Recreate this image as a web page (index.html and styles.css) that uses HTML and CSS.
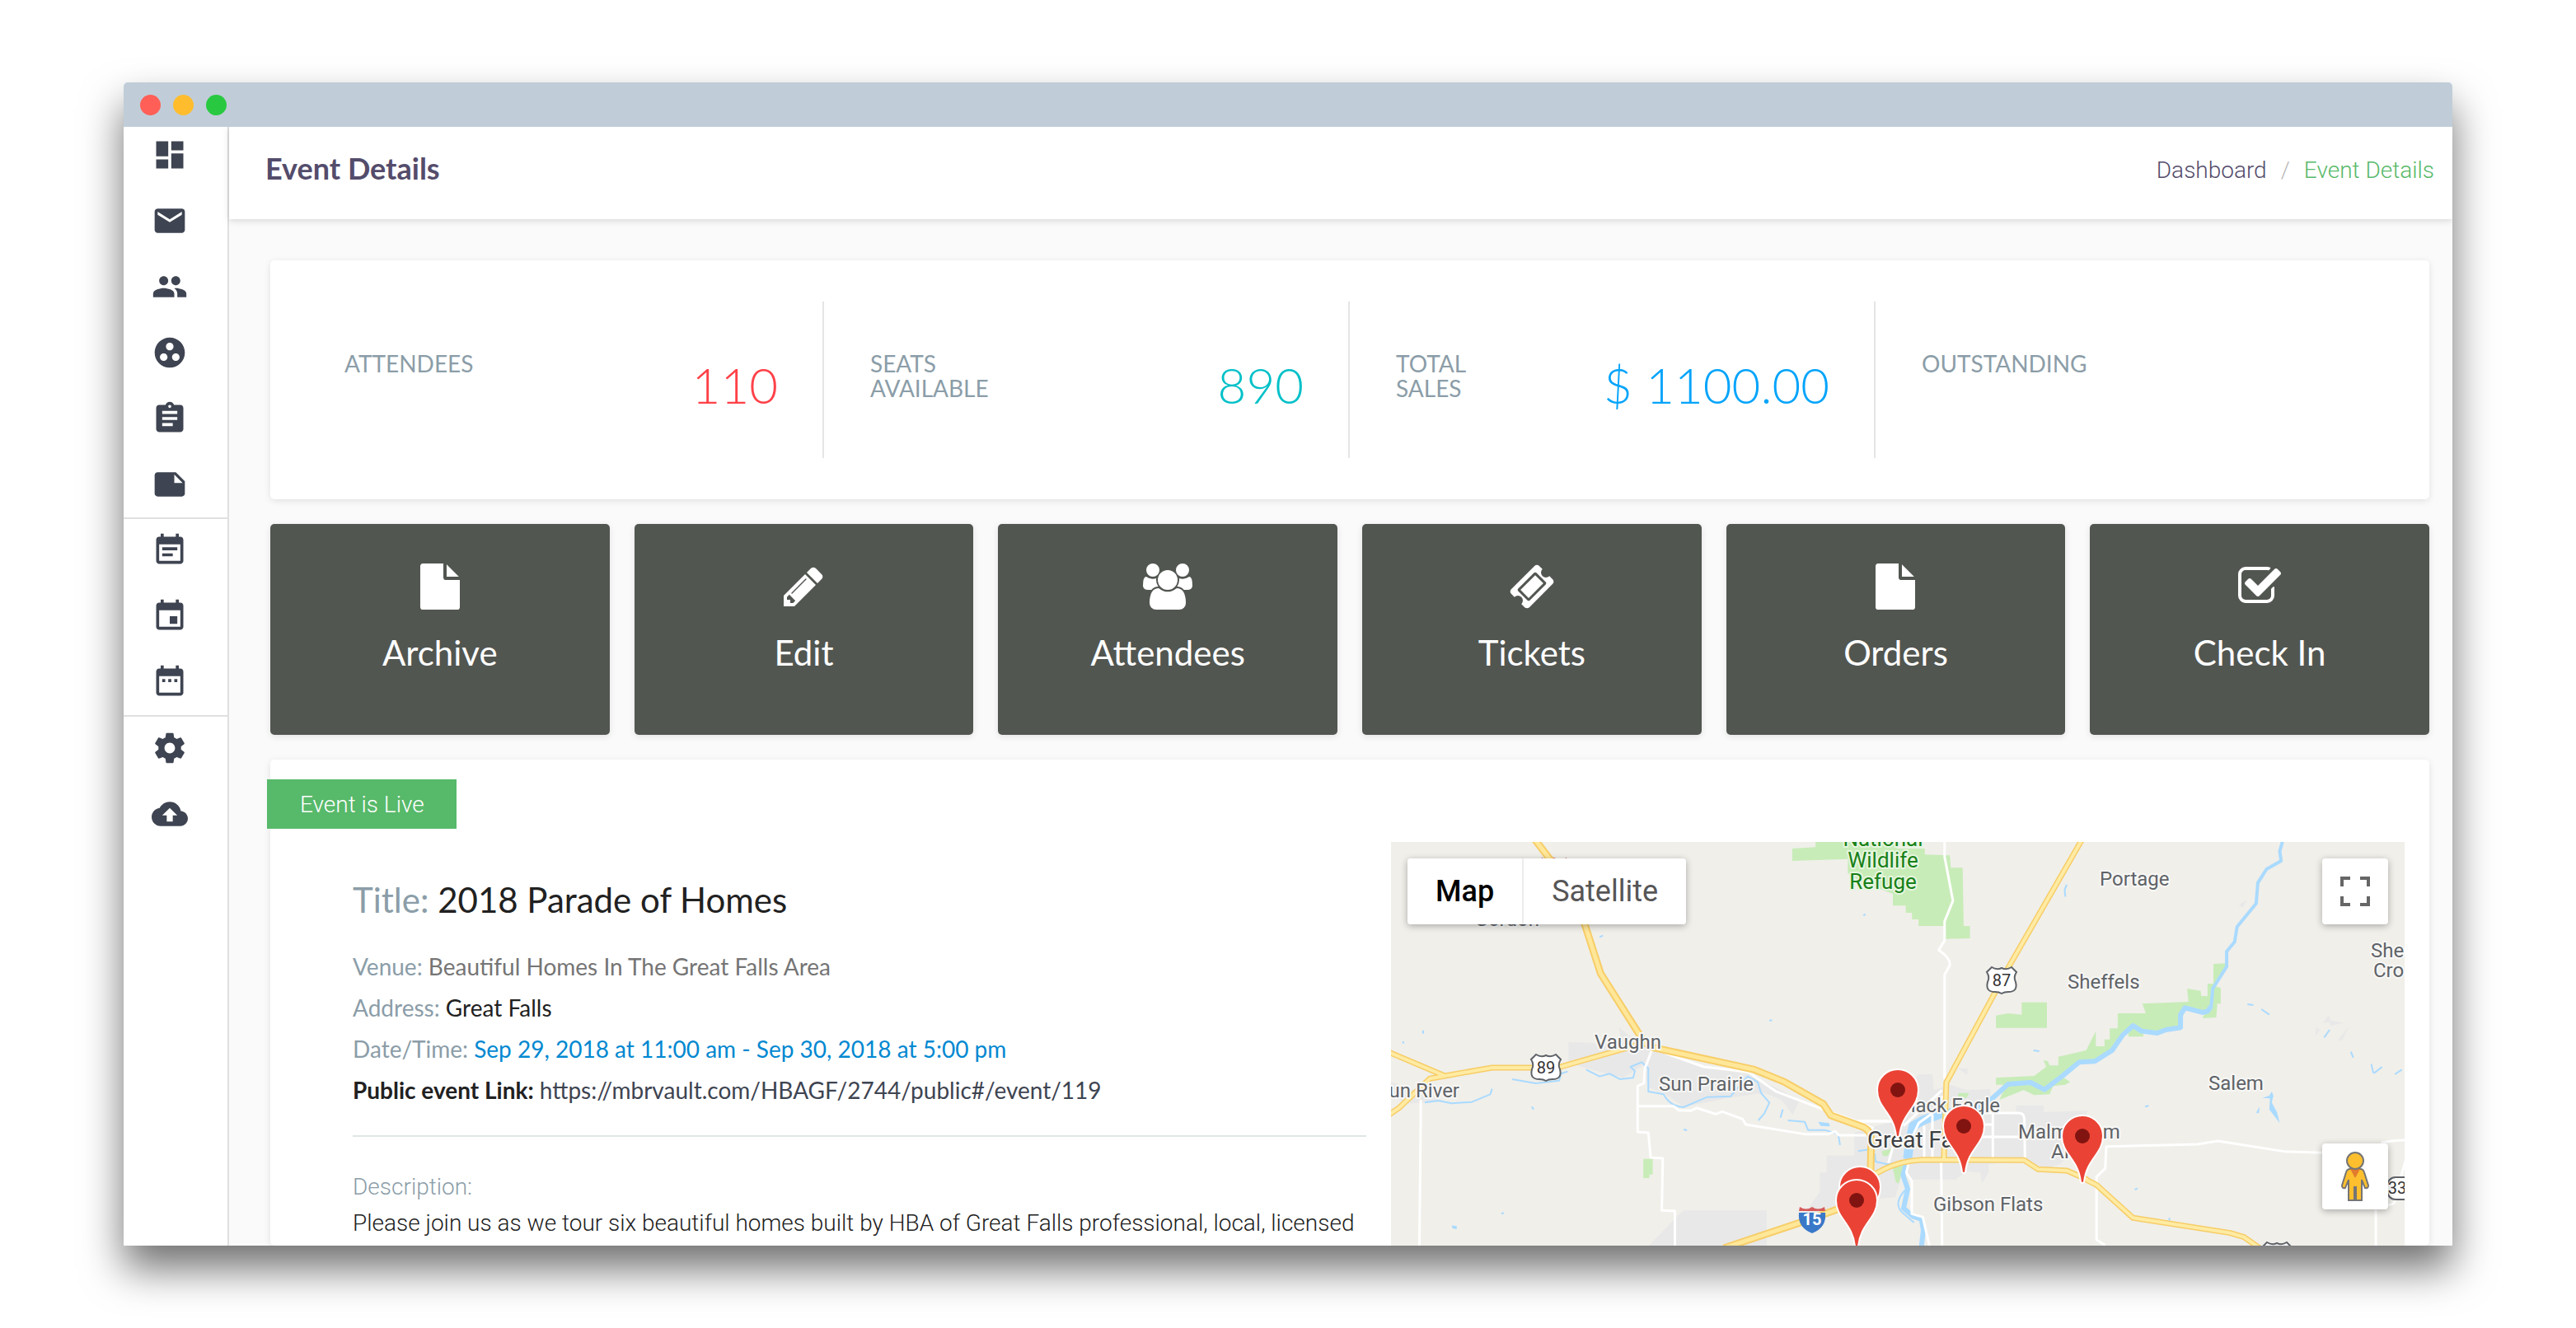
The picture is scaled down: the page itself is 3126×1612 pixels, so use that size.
FILE: index.html
```html
<!DOCTYPE html>
<html lang="en">
<head>
<meta charset="utf-8">
<meta name="viewport" content="width=device-width, initial-scale=1">
<title>Event Details</title>
<link rel="stylesheet" href="styles.css">
</head>
<body>
<div class="window">
  <div class="titlebar">
    <span class="light light-close"></span>
    <span class="light light-min"></span>
    <span class="light light-max"></span>
  </div>
  <div class="app">
    <nav class="sidebar" aria-label="Main">
      <div class="nav-group nav-group-first">
        <a href="#" aria-label="Dashboard"><svg viewBox="0 0 24 24"><path d="M3 13h8V3H3v10zm0 8h8v-6H3v6zm10 0h8V11h-8v10zm0-18v6h8V3h-8z"/></svg></a>
        <a href="#" aria-label="Mail"><svg viewBox="0 0 24 24"><path d="M20 4H4c-1.1 0-1.99.9-1.99 2L2 18c0 1.1.9 2 2 2h16c1.1 0 2-.9 2-2V6c0-1.1-.9-2-2-2zm0 4l-8 5-8-5V6l8 5 8-5v2z"/></svg></a>
        <a href="#" aria-label="Members"><svg viewBox="0 0 24 24"><path d="M16 11c1.66 0 2.99-1.34 2.99-3S17.660 5 16 5c-1.660 0-3 1.340-3 3s1.340 3 3 3zm-8 0c1.660 0 2.990-1.340 2.990-3S9.660 5 8 5C6.340 5 5 6.340 5 8s1.340 3 3 3zm0 2c-2.330 0-7 1.170-7 3.500V19h14v-2.500c0-2.330-4.670-3.500-7-3.500zm8 0c-.290 0-.620.020-.970.050 1.160.840 1.970 1.970 1.970 3.450V19h6v-2.500c0-2.330-4.670-3.500-7-3.500z"/></svg></a>
        <a href="#" aria-label="Groups"><svg viewBox="0 0 24 24"><path d="M12 2C6.480 2 2 6.480 2 12s4.480 10 10 10 10-4.480 10-10S17.520 2 12 2zM8 17.500c-1.380 0-2.500-1.120-2.500-2.500s1.120-2.500 2.500-2.500 2.500 1.120 2.500 2.500-1.120 2.500-2.500 2.500zM9.500 8c0-1.380 1.120-2.500 2.500-2.500s2.500 1.120 2.500 2.500-1.120 2.500-2.500 2.500S9.500 9.380 9.500 8zm6.500 9.500c-1.380 0-2.500-1.120-2.500-2.500s1.120-2.500 2.500-2.500 2.500 1.120 2.500 2.500-1.120 2.500-2.500 2.500z"/></svg></a>
        <a href="#" aria-label="Assignments"><svg viewBox="0 0 24 24"><path d="M19 3h-4.180C14.400 1.840 13.300 1 12 1c-1.300 0-2.400.840-2.820 2H5c-1.100 0-2 .9-2 2v14c0 1.100.9 2 2 2h14c1.100 0 2-.9 2-2V5c0-1.100-.9-2-2-2zm-7 0c.550 0 1 .450 1 1s-.450 1-1 1-1-.450-1-1 .450-1 1-1zm2 14H7v-2h7v2zm3-4H7v-2h10v2zm0-4H7V7h10v2z"/></svg></a>
        <a href="#" aria-label="Notes"><svg viewBox="0 0 24 24"><path d="M22 10l-6-6H4c-1.100 0-2 .9-2 2v12.010c0 1.100.9 1.990 2 1.990l16-.010c1.100 0 2-.890 2-1.990v-8zm-7-4.500l5.500 5.500H15V5.500z"/></svg></a>
      </div>
      <div class="nav-group">
        <a href="#" aria-label="Event notes"><svg viewBox="0 0 24 24"><path d="M17 10H7v2h10v-2zm2-7h-1V1h-2v2H8V1H6v2H5c-1.110 0-1.990.9-1.990 2L3 19c0 1.100.890 2 2 2h14c1.100 0 2-.9 2-2V5c0-1.100-.9-2-2-2zm0 16H5V8h14v11zm-5-5H7v2h7v-2z"/></svg></a>
        <a href="#" aria-label="Events"><svg viewBox="0 0 24 24"><path d="M17 12h-5v5h5v-5zM16 1v2H8V1H6v2H5c-1.110 0-1.990.9-1.990 2L3 19c0 1.100.890 2 2 2h14c1.100 0 2-.9 2-2V5c0-1.100-.9-2-2-2h-1V1h-2zm3 18H5V8h14v11z"/></svg></a>
        <a href="#" aria-label="Calendar"><svg viewBox="0 0 24 24"><path d="M9 10H7v2h2v-2zm4 0h-2v2h2v-2zm4 0h-2v2h2v-2zm2-7h-1V1h-2v2H8V1H6v2H5c-1.110 0-1.990.9-1.990 2L3 19c0 1.100.890 2 2 2h14c1.100 0 2-.9 2-2V5c0-1.100-.9-2-2-2zm0 16H5V8h14v11z"/></svg></a>
      </div>
      <div class="nav-group">
        <a href="#" aria-label="Settings"><svg viewBox="0 0 24 24"><path d="M19.430 12.980c.040-.320.070-.640.070-.980s-.030-.660-.070-.980l2.110-1.650c.190-.150.240-.420.120-.640l-2-3.460c-.120-.220-.390-.3-.610-.220l-2.490 1c-.520-.4-1.080-.730-1.690-.980l-.380-2.650C14.460 2.180 14.250 2 14 2h-4c-.250 0-.460.180-.490.420l-.380 2.650c-.610.250-1.170.590-1.690.980l-2.490-1c-.230-.090-.490 0-.610.220l-2 3.460c-.130.220-.070.490.120.640l2.110 1.650c-.040.320-.070.650-.070.980s.030.660.070.980l-2.110 1.650c-.190.150-.240.420-.120.640l2 3.460c.120.220.390.3.610.220l2.490-1c.520.4 1.080.730 1.690.980l.380 2.650c.030.240.240.420.490.420h4c.250 0 .460-.180.490-.420l.380-2.650c.610-.250 1.170-.590 1.690-.980l2.490 1c.230.090.490 0 .610-.220l2-3.460c.120-.220.070-.490-.120-.640l-2.110-1.650zM12 15.500c-1.930 0-3.500-1.570-3.500-3.500s1.570-3.500 3.500-3.500 3.500 1.570 3.500 3.500-1.570 3.500-3.500 3.500z"/></svg></a>
        <a href="#" aria-label="Backup"><svg viewBox="0 0 24 24"><path d="M19.350 10.040C18.670 6.590 15.640 4 12 4 9.110 4 6.600 5.640 5.350 8.040 2.340 8.360 0 10.910 0 14c0 3.310 2.690 6 6 6h13c2.760 0 5-2.240 5-5 0-2.640-2.050-4.780-4.650-4.960zM14 13v4h-4v-4H7l5-5 5 5h-3z"/></svg></a>
      </div>
    </nav>

    <div class="page">
      <header class="page-header">
        <h1>Event Details</h1>
        <nav class="breadcrumb" aria-label="Breadcrumb">
          <a href="#">Dashboard</a>
          <span class="slash">/</span>
          <span class="current">Event Details</span>
        </nav>
      </header>

      <main>
        <section class="card stats">
          <div class="stat"><span class="stat-label">ATTENDEES</span><span class="stat-value red">110</span></div>
          <div class="stat"><span class="stat-label">SEATS AVAILABLE</span><span class="stat-value teal">890</span></div>
          <div class="stat"><span class="stat-label">TOTAL SALES</span><span class="stat-value blue">$ 1100.00</span></div>
          <div class="stat"><span class="stat-label">OUTSTANDING</span></div>
        </section>

        <section class="tiles">
          <button class="tile" type="button"><svg viewBox="0 0 1536 1792"><path d="M1024 512V40q22 14 36 28l408 408q14 14 28 36h-472zm-128 32q0 40 28 68t68 28h544v1056q0 40-28 68t-68 28H96q-40 0-68-28t-28-68V96q0-40 28-68T96 0h800v544z"/></svg>Archive</button>
          <button class="tile" type="button"><svg viewBox="0 0 1792 1792"><path d="M491 1536l91-91-235-235-91 91v107h128v128h107zm523-928q0-22-22-22-10 0-17 7l-542 542q-7 7-7 17 0 22 22 22 10 0 17-7l542-542q7-7 7-17zm-54-192l416 416-832 832h-416v-416zm683 96q0 53-37 90l-166 166-416-416 166-165q36-38 90-38 53 0 91 38l235 234q37 39 37 91z"/></svg>Edit</button>
          <button class="tile" type="button"><svg viewBox="-64 0 1920 1792"><path d="M529 896q-162 5-265 128h-134q-82 0-138-40.500t-56-118.500q0-353 124-353 6 0 43.500 21t97.500 42.500 119 21.500q67 0 133-23-5 37-5 66 0 139 81 256zm1071 637q0 120-73 189.500t-194 69.500h-874q-121 0-194-69.500t-73-189.500q0-53 3.500-103.500t14-109 26.500-108.500 43-97.500 62-81 85.500-53.500 111.500-20q10 0 43 21.500t73 48 107 48 135 21.500 135-21.500 107-48 73-48 43-21.500q61 0 111.500 20t85.500 53.500 62 81 43 97.500 26.500 108.500 14 109 3.500 103.500zm-1024-1277q0 106-75 181t-181 75-181-75-75-181 75-181 181-75 181 75 75 181zm704 384q0 159-112.500 271.500t-271.500 112.500-271.500-112.500-112.500-271.500 112.500-271.500 271.500-112.500 271.500 112.500 112.500 271.500zm576 225q0 78-56 118.500t-138 40.500h-134q-103-123-265-128 81-117 81-256 0-29-5-66 66 23 133 23 59 0 119-21.500t97.500-42.500 43.500-21q124 0 124 353zm-128-609q0 106-75 181t-181 75-181-75-75-181 75-181 181-75 181 75 75 181z"/></svg>Attendees</button>
          <button class="tile" type="button"><svg viewBox="0 0 1792 1792"><path d="M1024 452l316 316-572 572-316-316zm-211 979l618-618q19-19 19-45t-19-45l-362-362q-18-18-45-18t-45 18l-618 618q-19 19-19 45t19 45l362 362q18 18 45 18t45-18zm889-637l-907 908q-37 37-90.500 37t-90.500-37l-126-125q56-56 56-136t-56-136-136-56-136 56l-125-126q-37-37-37-90.500t37-90.500l907-906q37-37 90.500-37t90.500 37l125 125q-56 56-56 136t56 136 136 56 136-56l126 125q37 37 37 90.500t-37 90.500z"/></svg>Tickets</button>
          <button class="tile" type="button"><svg viewBox="0 0 1536 1792"><path d="M1024 512V40q22 14 36 28l408 408q14 14 28 36h-472zm-128 32q0 40 28 68t68 28h544v1056q0 40-28 68t-68 28H96q-40 0-68-28t-28-68V96q0-40 28-68T96 0h800v544z"/></svg>Orders</button>
          <button class="tile" type="button"><svg viewBox="0 0 1792 1792"><path d="M1472 930v318q0 119-84.500 203.500t-203.500 84.500h-832q-119 0-203.500-84.500t-84.500-203.500v-832q0-119 84.500-203.500t203.500-84.500h832q63 0 117 25 15 7 18 23 3 17-9 29l-49 49q-10 10-23 10-3 0-9-2-23-6-45-6h-832q-66 0-113 47t-47 113v832q0 66 47 113t113 47h832q66 0 113-47t47-113v-254q0-13 9-22l64-64q10-10 23-10 6 0 12 3 20 8 20 29zm231-489l-814 814q-24 24-57 24t-57-24l-430-430q-24-24-24-57t24-57l110-110q24-24 57-24t57 24l263 263 647-647q24-24 57-24t57 24l110 110q24 24 24 57t-24 57z"/></svg>Check In</button>
        </section>

        <section class="card event">
          <span class="ribbon">Event is Live</span>
          <div class="event-body">
            <div class="details">
              <h2><span class="muted">Title:</span> 2018 Parade of Homes</h2>
              <p class="venue"><span class="muted">Venue:</span> Beautiful Homes In The Great Falls Area</p>
              <p><span class="muted">Address:</span> Great Falls</p>
              <p class="when"><span class="muted">Date/Time:</span> Sep 29, 2018 at 11:00 am - Sep 30, 2018 at 5:00 pm</p>
              <p><b>Public event Link:</b> <a href="#">https://mbrvault.com/HBAGF/2744/public#/event/119</a></p>
              <hr>
              <div class="description">
                <p class="muted">Description:</p>
                <p>Please join us as we tour six beautiful homes built by HBA of Great Falls professional, local, licensed</p>
              </div>
            </div>

            <div class="map">
              <svg class="map-canvas" viewBox="0 0 1230 490" preserveAspectRatio="xMinYMin slice" role="img" aria-label="Map of Great Falls">
                <defs>
                  <g id="highways">
                    <path transform="translate(-8 -12) scale(.408 .3333)" d="M10 800L180 888M10 1033L45 1003 135 898 180 888 320 858H435L525 855 610 825 710 790 765 770"/>
                    <path transform="translate(612 -12) scale(.421 .3333)" d="M537 30L325 495 285 590 147 912 140 1192M540 1260L580 1285 685 1405 965 1460 1005 1475 1050 1515"/>
                    <path transform="translate(512 258) scale(.3333)" d="M205 445L240 428Q310 387 400 383L770 385 820 418 925 423 1000 456"/>
                  </g>
                  <path id="freeway" transform="translate(-8 -12) scale(.408 .3333)" d="M448 28L490 95 560 220 597 340 643 515 765 750Q775 775 800 785L1100 865 1190 910 1305 990 1328 1032 1425 1075Q1448 1090 1448 1120L1446 1240 1410 1320 1345 1375 1230 1425 1010 1515"/>
                  <g id="pin">
                    <path d="M-2 56C-5 27-25 22-25 0A25 25 0 0 1 25 0C25 22 5 27 2 56Q0 58-2 56Z" fill="#ea4335" stroke="#fff" stroke-width="2"/>
                    <circle r="9" fill="#811411"/>
                  </g>
                  <path id="us-shield" d="M-12-16Q-6-12 0-15 6-12 12-16L18-10Q14-4 17 2 20 14 8 14 3 14 0 16-3 14-8 14-20 14-17 2-14-4-18-10Z" fill="#fff" stroke="#5f6368" stroke-width="2"/>
                  <g id="interstate">
                    <path d="M-15-15Q-7-10 0-15 7-10 15-15L16-10H-16Z" fill="#d65a5a"/>
                    <path d="M-16-8H16Q18 10 0 17-18 10-16-8Z" fill="#3a78c8"/>
                  </g>
                </defs>

                <g class="urban">
                  <path transform="translate(-8 -12) scale(.408 .3333)" d="M547 765L620 768 705 775 698 710 765 780 960 855 1090 885 1235 975 1215 1030 1180 975 1130 950 1040 965 890 1000 830 950 785 930 770 850 710 895 600 860 547 840ZM780 1515L870 1400 890 1378H1137V1515ZM20 910L130 960 180 980 60 990 20 950Z"/>
                  <path transform="translate(512 258) scale(.3333)" d="M-60 620L25 500V430H50V368H150V285L300 240 355 100 385 72H435L440 130 500 110 560 130 645 125 650 200 740 220V185H840V210L1000 205 960 330 900 400 830 420 770 385 640 400V430L615 470 610 430 560 425 520 455H360L330 420 300 520 240 525 90 560 0 600Z"/>
                  <path transform="translate(612 -12) scale(.421 .3333)" d="M990 265L1012 248 1003 275ZM1232 695L1250 665 1255 690ZM1210 745L1213 710 1224 720ZM1250 685L1292 695 1255 705ZM1275 758L1308 707 1288 758ZM180 860L208 862 208 885Z"/>
                </g>
                <g class="park">
                  <path transform="translate(612 -12) scale(.421 .3333)" d="M-297 60L-230 55V30H0L5 60H85V82L157 85 160 130H194L197 342H215V387L145 389 142 342H67V318H48V294H30V268H-7V225L-100 180-137 150V98L-297 105ZM290 668L325 660 364 665V620H437V713H290ZM290 895L400 888 435 855 427 830 440 835 445 850 470 850V818L550 795 578 725V780H603V755H618V715H641V660H722L712 625 845 618 841 570 880 578 882 597H900V552H917V480L955 478 920 560 938 568V625H928L925 675 885 678 895 655 835 640 820 720 760 730 715 728V745H672V715L655 740 625 795 575 835 530 838 480 890 504 910 490 920 455 925 445 955 400 958 370 940 300 975 320 920H290Z"/>
                  <path transform="translate(-8 -12) scale(.408 .3333)" d="M770 1190H798V1247H788V1260H770Z"/>
                  <path transform="translate(512 258) scale(.3333)" d="M250 352L288 343 272 370 255 370ZM290 410L330 405 312 470 302 465ZM530 140L568 140 560 158 528 155Z"/>
                </g>
                <g class="creek">
                  <path transform="translate(-8 -12) scale(.408 .3333)" d="M380 900L450 915 520 905 525 880 545 872M600 865L640 890 670 880 700 900 740 895 745 870 732 855 765 838 785 860 785 945 830 955Q850 1000 890 1002L960 965 1030 962 1080 890 1110 910 1120 950 1145 985 1130 1025 1112 1050M120 985L160 978 200 988 260 983 315 955 320 935M1178 1040L1185 1010M1200 1050L1250 1055 1260 1085 1310 1085 1350 1100 1355 1140M640 382L650 377M1425 305L1430 298M1145 687L1153 685M115 722V734M56 762V770M438 1000L444 1010M890 1083L900 1086M348 1390L355 1387"/>
                  <path transform="translate(612 -12) scale(.421 .3333)" d="M490 235L488 210 494 192M1015 627L1032 630M1055 645L1078 665M1313 800L1320 822M1372 845L1378 878M1380 878L1403 855M1440 882L1460 865M1236 748L1252 720M398 795L415 798M720 1000L730 997M690 1302L698 1298M790 1405V1417"/>
                  <path transform="translate(512 258) scale(.3333)" d="M165 352L210 345M225 360L228 390 270 400 300 395M340 490Q290 540 325 575L368 612"/>
                </g>
                <g class="lake">
                  <path transform="translate(-8 -12) scale(.408 .3333)" d="M1290 1055L1322 1060 1325 1072 1298 1070ZM200 1433L215 1435V1446L203 1444Z"/>
                  <path transform="translate(612 -12) scale(.421 .3333)" d="M1085 945L1090 960 1085 985 1100 1020 1108 1060 1090 1030 1078 1010 1080 970 1058 968 1078 960ZM1050 1000L1040 1022 1048 1024Z"/>
                </g>
                <path class="river" transform="translate(612 -12) scale(.421 .3333)" d="M1117 30L1108 70 1112 105 1070 135 1045 185 1040 260 985 345 978 400 955 435 955 490 915 570 910 640"/>
                <path class="river wide" transform="translate(612 -12) scale(.421 .3333)" d="M910 635L900 653 885 657 835 640 822 665V712L780 720 755 732 710 725 685 705 655 740 625 795 575 835 530 838 480 890 430 938 390 912 325 918 275 975"/>
                <path class="river broad" transform="translate(512 258) scale(.3333)" d="M650 165L600 205 470 215 400 240 365 260 352 320 345 380"/>
                <path class="river wide" transform="translate(512 258) scale(.3333)" d="M345 380L328 440 345 490 330 560 365 590 395 600 402 640 395 700"/>

                <g class="street">
                  <path transform="translate(-8 -12) scale(.408 .3333)" d="M795 795L775 860 772 915 753 925V1092L785 1095 792 1185 828 1188 825 1378 864 1380V1515M753 998H860L875 1013 910 1015 930 1005 985 1027 1005 1018 1065 1045 1075 1065 1250 1100H1320L1340 1090 1352 1104H1450M835 805L950 855 1080 872 1165 945 1310 1012 1420 1060 1455 1080M108 975V1045L104 1515M1400 1053H1540"/>
                  <path transform="translate(612 -12) scale(.421 .3333)" d="M142 30V90L166 250 142 325V395L125 430Q160 460 157 485L142 520V900M132 1190L135 1515M605 1505L580 1485V1255L605 1225 608 1145 870 1137 930 1125 1120 1163 1235 1168M1385 1370V1515M1400 1132Q1430 1122 1475 1122M1472 1190L1450 1290 1440 1345Q1435 1358 1420 1358"/>
                  <path transform="translate(512 258) scale(.3333)" d="M170 243H320M520 300H770M490 255H655M480 213H750Q770 213 770 240L772 380M655 213V380M435 220V380M405 260V380M300 305L275 395M350 390L340 430 360 460V580L400 592 425 700M475 150L440 210 385 250 362 300V345M330 260L470 130"/>
                </g>
                <use href="#highways" class="highway-casing"/>
                <use href="#freeway" class="freeway-casing"/>
                <use href="#highways" class="highway-fill"/>
                <use href="#freeway" class="freeway-fill"/>

                <use href="#interstate" x="198" y="34"/>
                <use href="#interstate" x="511" y="458"/>
                <text class="route light-text" x="511" y="465">15</text>
                <use href="#us-shield" x="188" y="274"/>
                <text class="route" x="188" y="281">89</text>
                <use href="#us-shield" x="741" y="168"/>
                <text class="route" x="741" y="175">87</text>
                <use href="#us-shield" x="1075" y="502"/>
                <rect x="1209" y="407" width="52" height="27" rx="10" fill="#fff" stroke="#5f6368" stroke-width="2"/>
                <text class="route" x="1221" y="427">33</text>

                <g class="place">
                  <text x="180" y="102" text-anchor="end">Gordon</text>
                  <text x="247" y="251">Vaughn</text>
                  <text x="325" y="302">Sun Prairie</text>
                  <text x="83" y="310" text-anchor="end">Sun River</text>
                  <text x="860" y="53">Portage</text>
                  <text x="821" y="178">Sheffels</text>
                  <text x="992" y="301">Salem</text>
                  <text x="1189" y="140">She</text>
                  <text x="1192" y="164">Cro</text>
                  <text x="658" y="448">Gibson Flats</text>
                  <text x="761" y="360">Malmstrom</text>
                  <text x="801" y="384">AFB</text>
                  <text x="739" y="328" text-anchor="end">Black Eagle</text>
                  <text class="city" x="578" y="371">Great Falls</text>
                </g>
                <g class="place refuge">
                  <text x="597" y="5">National</text>
                  <text x="597" y="31">Wildlife</text>
                  <text x="597" y="57">Refuge</text>
                </g>

                <use href="#pin" x="615" y="301"/>
                <use href="#pin" x="695" y="345"/>
                <use href="#pin" x="839" y="357"/>
                <use href="#pin" x="569" y="419"/>
                <use href="#pin" x="565" y="435"/>
              </svg>

              <div class="map-types">
                <button type="button" class="active">Map</button>
                <button type="button">Satellite</button>
              </div>
              <button type="button" class="map-control fullscreen" aria-label="Toggle fullscreen">
                <svg viewBox="0 0 36 36" width="36" height="36"><path d="M0 0h12v4H4v8H0zM24 0h12v12h-4V4h-8zM0 24h4v8h8v4H0zM32 24h4v12H24v-4h8z" fill="#666"/></svg>
              </button>
              <button type="button" class="map-control pegman" aria-label="Street View">
                <svg viewBox="0 0 36 62" width="36" height="62"><path d="M12 22Q8 22 7 26L2 42Q2 46 6 45L10 35V60H17V44H19V60H26V35L30 45Q34 46 34 42L29 26Q28 22 24 22Z" fill="#fdbf2d" stroke="#757575" stroke-width="2"/><path d="M12 22H24L18 33Z" fill="#e17b2d"/><circle cx="18" cy="12" r="10" fill="#fdbf2d" stroke="#757575" stroke-width="2"/></svg>
              </button>
            </div>
          </div>
        </section>
      </main>
    </div>
  </div>
</div>
</body>
</html>
```
FILE: styles.css
```css
* {
  box-sizing: border-box;
}

body {
  margin: 0;
  padding: 100px 150px;
  height: 100vh;
  overflow: hidden;
  background: #fff;
  color: #212121;
  font-family: Lato, "Liberation Sans", sans-serif;
  font-size: 28px;
}

h1, h2, p {
  margin: 0;
  font-weight: inherit;
}

a {
  color: inherit;
  text-decoration: none;
}

button {
  border: 0;
  padding: 0;
  background: #fff;
  font: inherit;
  cursor: pointer;
}

/* Browser frame */
.window {
  display: flex;
  flex-direction: column;
  height: 100%;
  border-radius: 5px 5px 0 0;
  background: #fff;
  box-shadow: 0 28px 50px rgba(0, 0, 0, .56);
}

.titlebar {
  display: flex;
  align-items: center;
  gap: 15px;
  flex: none;
  height: 54px;
  padding-left: 20px;
  border-radius: 5px 5px 0 0;
  background: #c0cdd8;
}

.light {
  width: 25px;
  height: 25px;
  border-radius: 50%;
}

.light-close { background: #ff5f57; }
.light-min { background: #ffbd2e; }
.light-max { background: #28c940; }

.app {
  display: flex;
  flex: 1;
  min-height: 0;
  overflow: hidden;
}

/* Icon sidebar */
.sidebar {
  flex: none;
  width: 128px;
  border-right: 2px solid #e0e0e0;
}

.nav-group {
  display: flex;
  flex-direction: column;
  align-items: center;
  gap: 36px;
  padding: 16px 14px 18px 0;
  border-top: 2px solid #e0e0e0;
}

.nav-group-first {
  padding-top: 12px;
  border-top: 0;
}

.nav-group svg {
  display: block;
  width: 44px;
  height: 44px;
  fill: #3e4451;
}

/* Page */
.page {
  flex: 1;
  min-width: 0;
  background: #fafafa;
}

.page-header {
  position: relative;
  display: flex;
  align-items: center;
  justify-content: space-between;
  height: 112px;
  padding: 0 22px 12px 44px;
  background: #fff;
  box-shadow: 0 2px 8px rgba(0, 0, 0, .14);
}

h1 {
  color: #544c6b;
  font-size: 36px;
  font-weight: 700;
}

.breadcrumb {
  display: flex;
  gap: 17px;
  padding-top: 4px;
  color: #544c6b;
  font-family: Roboto, sans-serif;
  font-weight: 300;
}

.breadcrumb .slash { color: #bbb; }
.breadcrumb .current { color: #57b96a; }

main {
  display: flex;
  flex-direction: column;
  gap: 30px;
  padding: 50px 28px 30px 50px;
}

.card {
  border-radius: 5px;
  background: #fff;
  box-shadow: 0 2px 8px rgba(0, 0, 0, .1);
}

/* Stats */
.stats {
  display: grid;
  grid-template-columns: repeat(4, 1fr);
  padding: 50px 34px;
}

.stat {
  display: flex;
  align-items: flex-start;
  justify-content: space-between;
  height: 190px;
  padding: 60px 54px 0 56px;
  border-right: 2px solid #e4e5e7;
}

.stat:last-child {
  border-right: 0;
}

.stat-label {
  width: min-content;
  color: #8b9da8;
  line-height: 30px;
}

.stat-value {
  padding-top: 11px;
  font-size: 60px;
  font-weight: 300;
  line-height: 60px;
  white-space: nowrap;
}

.red { color: #ff4148; }
.teal { color: #00c0c8; }
.blue { color: #03a4fb; }

/* Action tiles */
.tiles {
  display: grid;
  grid-template-columns: repeat(6, 1fr);
  gap: 30px;
}

.tile {
  display: flex;
  flex-direction: column;
  align-items: center;
  gap: 27px;
  height: 256px;
  padding-top: 48px;
  border-radius: 5px;
  background: #525651;
  color: #fff;
  font-size: 42px;
  line-height: 50px;
  box-shadow: 0 2px 8px rgba(0, 0, 0, .1);
}

.tile svg {
  height: 56px;
  fill: #fff;
}

/* Event card */
.event {
  padding-top: 24px;
}

.ribbon {
  display: block;
  width: max-content;
  margin: 0 0 16px -4px;
  padding: 2px 39px 0 40px;
  background: #57b96a;
  color: #fff;
  font-family: Roboto, sans-serif;
  font-weight: 300;
  line-height: 58px;
}

.event-body {
  display: grid;
  grid-template-columns: 1fr 1fr;
  gap: 30px;
  padding: 0 30px 0 100px;
}

.details {
  min-width: 0;
  padding-top: 45px;
  line-height: 50px;
}

h2 {
  margin-bottom: 31px;
  font-size: 42px;
}

.muted { color: #8b9da8; }
.venue { color: #757575; }
.when { color: #0288d1; }
.details a { color: #3e4451; }

hr {
  margin: 30px 0 39px;
  border: 0;
  border-top: 2px solid #dfe8e2;
}

.description {
  font-family: Roboto, sans-serif;
  font-weight: 300;
  line-height: 44px;
}

/* Map */
.map {
  position: relative;
  height: 490px;
  overflow: hidden;
  background: #f0efea;
  font-family: Roboto, sans-serif;
}

.map-canvas {
  display: block;
  width: 100%;
  height: 100%;
}

.map-canvas path {
  vector-effect: non-scaling-stroke;
}

.urban { fill: #e8e8e8; }
.park { fill: #c8ecb8; }
.lake { fill: #aadaff; }

.creek, .river, .street, .highway-casing, .highway-fill, .freeway-casing, .freeway-fill {
  fill: none;
  stroke-linejoin: round;
}

.creek { stroke: #aadaff; stroke-width: 2px; }
.river { stroke: #aadaff; stroke-width: 4px; }
.river.wide { stroke-width: 6px; }
.river.broad { stroke-width: 11px; }
.street { stroke: #fff; stroke-width: 3px; }
.highway-casing { stroke: #f7cd67; stroke-width: 7px; }
.highway-fill { stroke: #ffeba3; stroke-width: 4px; }
.freeway-casing { stroke: #f7cd67; stroke-width: 9px; }
.freeway-fill { stroke: #ffe799; stroke-width: 5px; }

.place {
  fill: #5f6368;
  font-size: 24px;
  stroke: #f7f7f5;
  stroke-width: 4px;
  stroke-linejoin: round;
  paint-order: stroke;
}

.city {
  fill: #3c4043;
  font-size: 28px;
}

.refuge {
  fill: #188018;
  font-size: 26px;
  text-anchor: middle;
  stroke: #e6f6df;
}

.route {
  fill: #333;
  font-size: 20px;
  text-anchor: middle;
}

.light-text {
  fill: #fff;
  font-weight: 700;
}

.map-types {
  position: absolute;
  top: 20px;
  left: 20px;
  display: flex;
  border-radius: 4px;
  box-shadow: 0 2px 8px rgba(0, 0, 0, .3);
}

.map-types button {
  height: 80px;
  padding: 0 34px;
  border-radius: 0 4px 4px 0;
  color: #565656;
  font-size: 36px;
}

.map-types .active {
  border-right: 2px solid #ececec;
  border-radius: 4px 0 0 4px;
  color: #000;
  font-weight: 500;
}

.map-control {
  position: absolute;
  right: 20px;
  display: grid;
  place-items: center;
  width: 80px;
  height: 80px;
  border-radius: 4px;
  box-shadow: 0 2px 8px rgba(0, 0, 0, .3);
}

.fullscreen { top: 20px; }
.pegman { bottom: 44px; }
```
